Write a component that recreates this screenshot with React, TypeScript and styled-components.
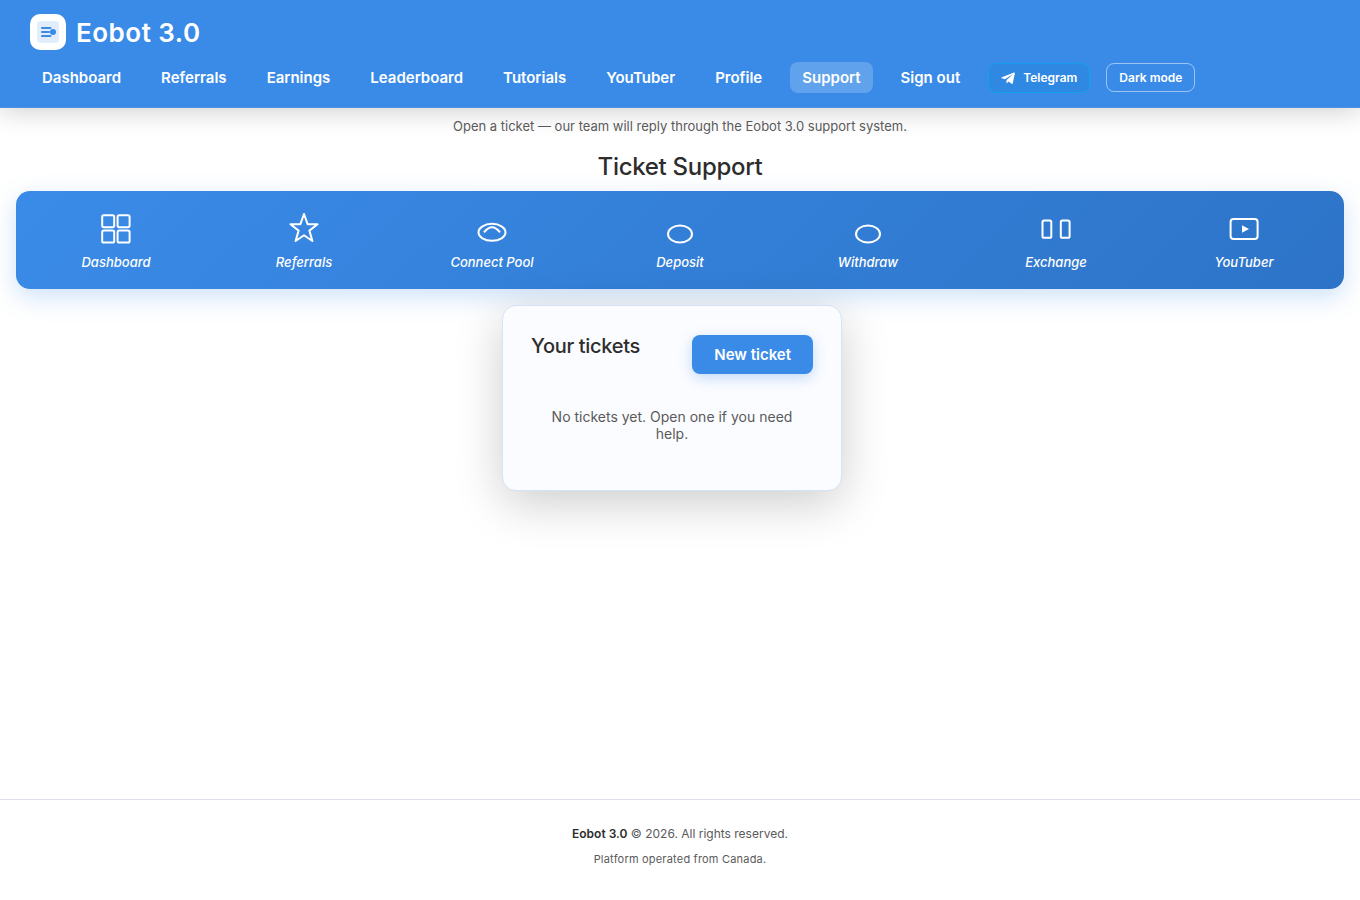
import React from "react";
import styled, { createGlobalStyle } from "styled-components";

const GlobalStyle = createGlobalStyle`
  * { box-sizing: border-box; }
  body {
    margin: 0;
    background: #fff;
    color: #2d2d2d;
    font-family: Inter, "Liberation Sans", sans-serif;
    font-size: 14px;
  }
`;

const Page = styled.div`
  display: flex;
  flex-direction: column;
  min-height: 100vh;
`;

const Header = styled.header`
  display: flex;
  flex-direction: column;
  gap: 12px;
  padding: 14px 30px;
  background: #3a8be8;
  border-bottom: 1px solid #4a92e6;
  box-shadow: 0 4px 24px rgba(0, 0, 0, 0.18);
`;

const Brand = styled.a`
  display: flex;
  align-items: flex-start;
  align-self: flex-start;
  gap: 10px;
  height: 36px;
  color: #fff;
  font-size: 26px;
  line-height: 38px;
  font-weight: 600;
  letter-spacing: 0.5px;
  text-decoration: none;
`;

const BrandMark = styled.span`
  display: flex;
  align-items: center;
  justify-content: center;
  width: 36px;
  height: 36px;
  border-radius: 10px;
  background: #fff;
`;

const Nav = styled.nav`
  display: flex;
  flex-wrap: wrap;
  align-items: center;
  gap: 16px;
`;

const NavLink = styled.a<{ $active?: boolean }>`
  padding: 6px 12px;
  border-radius: 8px;
  background: ${(p) => (p.$active ? "rgba(255, 255, 255, 0.2)" : "transparent")};
  color: #fff;
  font-size: 15px;
  line-height: 19px;
  font-weight: 600;
  text-decoration: none;
`;

const TelegramLink = styled.a`
  display: flex;
  align-items: center;
  gap: 8px;
  padding: 6px 12px;
  border: 1px solid #14a0f0;
  border-radius: 8px;
  background: #2f89e3;
  color: #fff;
  font-size: 12px;
  line-height: 16px;
  font-weight: 600;
  text-decoration: none;
`;

const ThemeButton = styled.button`
  padding: 6px 12px;
  border: 1px solid rgba(255, 255, 255, 0.5);
  border-radius: 8px;
  background: transparent;
  color: #fff;
  font-family: inherit;
  font-size: 12px;
  line-height: 15px;
  font-weight: 600;
  cursor: pointer;
`;

const Main = styled.main`
  display: flex;
  flex-direction: column;
  flex: 1;
  padding: 9px 16px 0;
`;

const Intro = styled.p`
  margin: 0;
  color: #5a5a5a;
  font-size: 13px;
  line-height: 18px;
  text-align: center;
`;

const Title = styled.h1`
  margin: 17px 0 10px;
  font-size: 24px;
  line-height: 29px;
  font-weight: 500;
  letter-spacing: -0.3px;
  text-align: center;
`;

const Shortcuts = styled.nav`
  display: grid;
  grid-template-columns: repeat(7, 1fr);
  padding: 20px 6px 18px;
  border-radius: 14px;
  background: linear-gradient(135deg, #3a8be8, #2d74c8);
  box-shadow: 0 8px 24px rgba(58, 139, 232, 0.25);
`;

const Shortcut = styled.a`
  display: flex;
  flex-direction: column;
  align-items: center;
  gap: 6px;
  color: #fff;
  font-size: 13px;
  line-height: 18px;
  font-style: italic;
  font-weight: 500;
  text-decoration: none;
`;

const Icon = styled.svg`
  width: 36px;
  height: 36px;
  fill: none;
  stroke: #fff;
  stroke-width: 2;
`;

const Card = styled.section`
  align-self: center;
  width: 340px;
  max-width: 100%;
  margin: 16px 16px 0 0;
  padding: 29px 28px 32px;
  border: 1px solid #d3e4f7;
  border-radius: 14px;
  background: #fbfcff;
  box-shadow: 0 12px 48px rgba(0, 0, 0, 0.2);
`;

const CardHeader = styled.div`
  display: flex;
  align-items: flex-start;
  justify-content: space-between;
`;

const CardTitle = styled.h2`
  margin: 0;
  font-size: 20px;
  line-height: 22px;
  font-weight: 500;
  letter-spacing: -0.3px;
`;

const NewTicket = styled.button`
  padding: 10px 22px;
  border: 0;
  border-radius: 8px;
  background: #3a8be8;
  box-shadow: 0 4px 14px rgba(58, 139, 232, 0.3);
  color: #fff;
  font-family: inherit;
  font-size: 15px;
  line-height: 19px;
  font-weight: 600;
  cursor: pointer;
`;

const Empty = styled.p`
  margin: 0;
  padding: 34px 16px 16px;
  color: #5a5a5a;
  font-size: 14px;
  line-height: 17px;
  text-align: center;
`;

const Footer = styled.footer`
  display: flex;
  flex-direction: column;
  gap: 9px;
  padding: 26px 16px 33px;
  border-top: 1px solid #dde2ea;
  color: #5a5a5a;
  text-align: center;
`;

const Copyright = styled.p`
  margin: 0;
  font-size: 12px;
  line-height: 16px;

  strong {
    color: #2d2d2d;
    font-weight: 600;
  }
`;

const Origin = styled.p`
  margin: 0;
  font-size: 11px;
  line-height: 16px;
  letter-spacing: 0.2px;
`;

const navItems = [
  "Dashboard",
  "Referrals",
  "Earnings",
  "Leaderboard",
  "Tutorials",
  "YouTuber",
  "Profile",
  "Support",
  "Sign out",
];

const shortcuts = [
  {
    label: "Dashboard",
    art: (
      <>
        <rect x="4.2" y="4.2" width="12" height="12" rx="1.6" />
        <rect x="19.6" y="4.2" width="12" height="12" rx="1.6" />
        <rect x="4.2" y="19.6" width="12" height="12" rx="1.6" />
        <rect x="19.6" y="19.6" width="12" height="12" rx="1.6" />
      </>
    ),
  },
  {
    label: "Referrals",
    art: (
      <path
        strokeLinejoin="round"
        d="M18 3L21.6 13.2H31.5L23.4 19.6L26.4 30L18 24.2L9.6 30L12.6 19.6L4.5 13.2H14.4Z"
      />
    ),
  },
  {
    label: "Connect Pool",
    art: (
      <>
        <ellipse cx="18" cy="21.3" rx="13.5" ry="8.5" />
        <path d="M10 21.3Q18 11 26 21.3" />
      </>
    ),
  },
  { label: "Deposit", art: <ellipse cx="18" cy="23" rx="12" ry="8.5" /> },
  { label: "Withdraw", art: <ellipse cx="18" cy="23" rx="12" ry="8.5" /> },
  {
    label: "Exchange",
    art: (
      <>
        <rect x="4.5" y="9.4" width="8.8" height="17.4" rx="1.6" />
        <rect x="22.8" y="9.4" width="8.8" height="17.4" rx="1.6" />
      </>
    ),
  },
  {
    label: "YouTuber",
    art: (
      <>
        <rect x="4.6" y="8" width="27" height="20" rx="3" />
        <path fill="#fff" stroke="none" d="M16 14.2L23 18L16 21.8Z" />
      </>
    ),
  },
];

export default function App() {
  return (
    <Page>
      <GlobalStyle />
      <Header>
        <Brand href="#">
          <BrandMark>
            <svg width="22" height="22" viewBox="0 0 22 22" aria-hidden="true">
              <rect width="22" height="22" rx="4" fill="#e1edfb" />
              <path
                d="M5 7H13.5M5 11H12M5 15H13.5"
                stroke="#3a8be8"
                strokeWidth="2"
                strokeLinecap="round"
              />
              <circle cx="16" cy="11" r="3" fill="#3a8be8" />
            </svg>
          </BrandMark>
          Eobot 3.0
        </Brand>
        <Nav aria-label="Main">
          {navItems.map((label) => (
            <NavLink key={label} href="#" $active={label === "Support"}>
              {label}
            </NavLink>
          ))}
          <TelegramLink href="#">
            <svg width="14" height="14" viewBox="2.6 2.4 18.6 18.6" fill="#fff" aria-hidden="true">
              <path d="M9.78 18.65l.28-4.23 7.68-6.92c.34-.31-.07-.46-.52-.19L7.74 13.3 3.64 12c-.88-.25-.89-.86.2-1.3l15.97-6.16c.73-.33 1.43.18 1.15 1.3l-2.72 12.81c-.19.91-.74 1.13-1.5.68L12.6 16.3l-1.99 1.93c-.23.23-.42.42-.83.42z" />
            </svg>
            Telegram
          </TelegramLink>
          <ThemeButton type="button">Dark mode</ThemeButton>
        </Nav>
      </Header>
      <Main>
        <Intro>Open a ticket — our team will reply through the Eobot 3.0 support system.</Intro>
        <Title>Ticket Support</Title>
        <Shortcuts aria-label="Shortcuts">
          {shortcuts.map(({ label, art }) => (
            <Shortcut key={label} href="#">
              <Icon viewBox="0 0 36 36" aria-hidden="true">
                {art}
              </Icon>
              {label}
            </Shortcut>
          ))}
        </Shortcuts>
        <Card>
          <CardHeader>
            <CardTitle>Your tickets</CardTitle>
            <NewTicket type="button">New ticket</NewTicket>
          </CardHeader>
          <Empty>No tickets yet. Open one if you need help.</Empty>
        </Card>
      </Main>
      <Footer>
        <Copyright>
          <strong>Eobot 3.0</strong> © 2026. All rights reserved.
        </Copyright>
        <Origin>Platform operated from Canada.</Origin>
      </Footer>
    </Page>
  );
}
